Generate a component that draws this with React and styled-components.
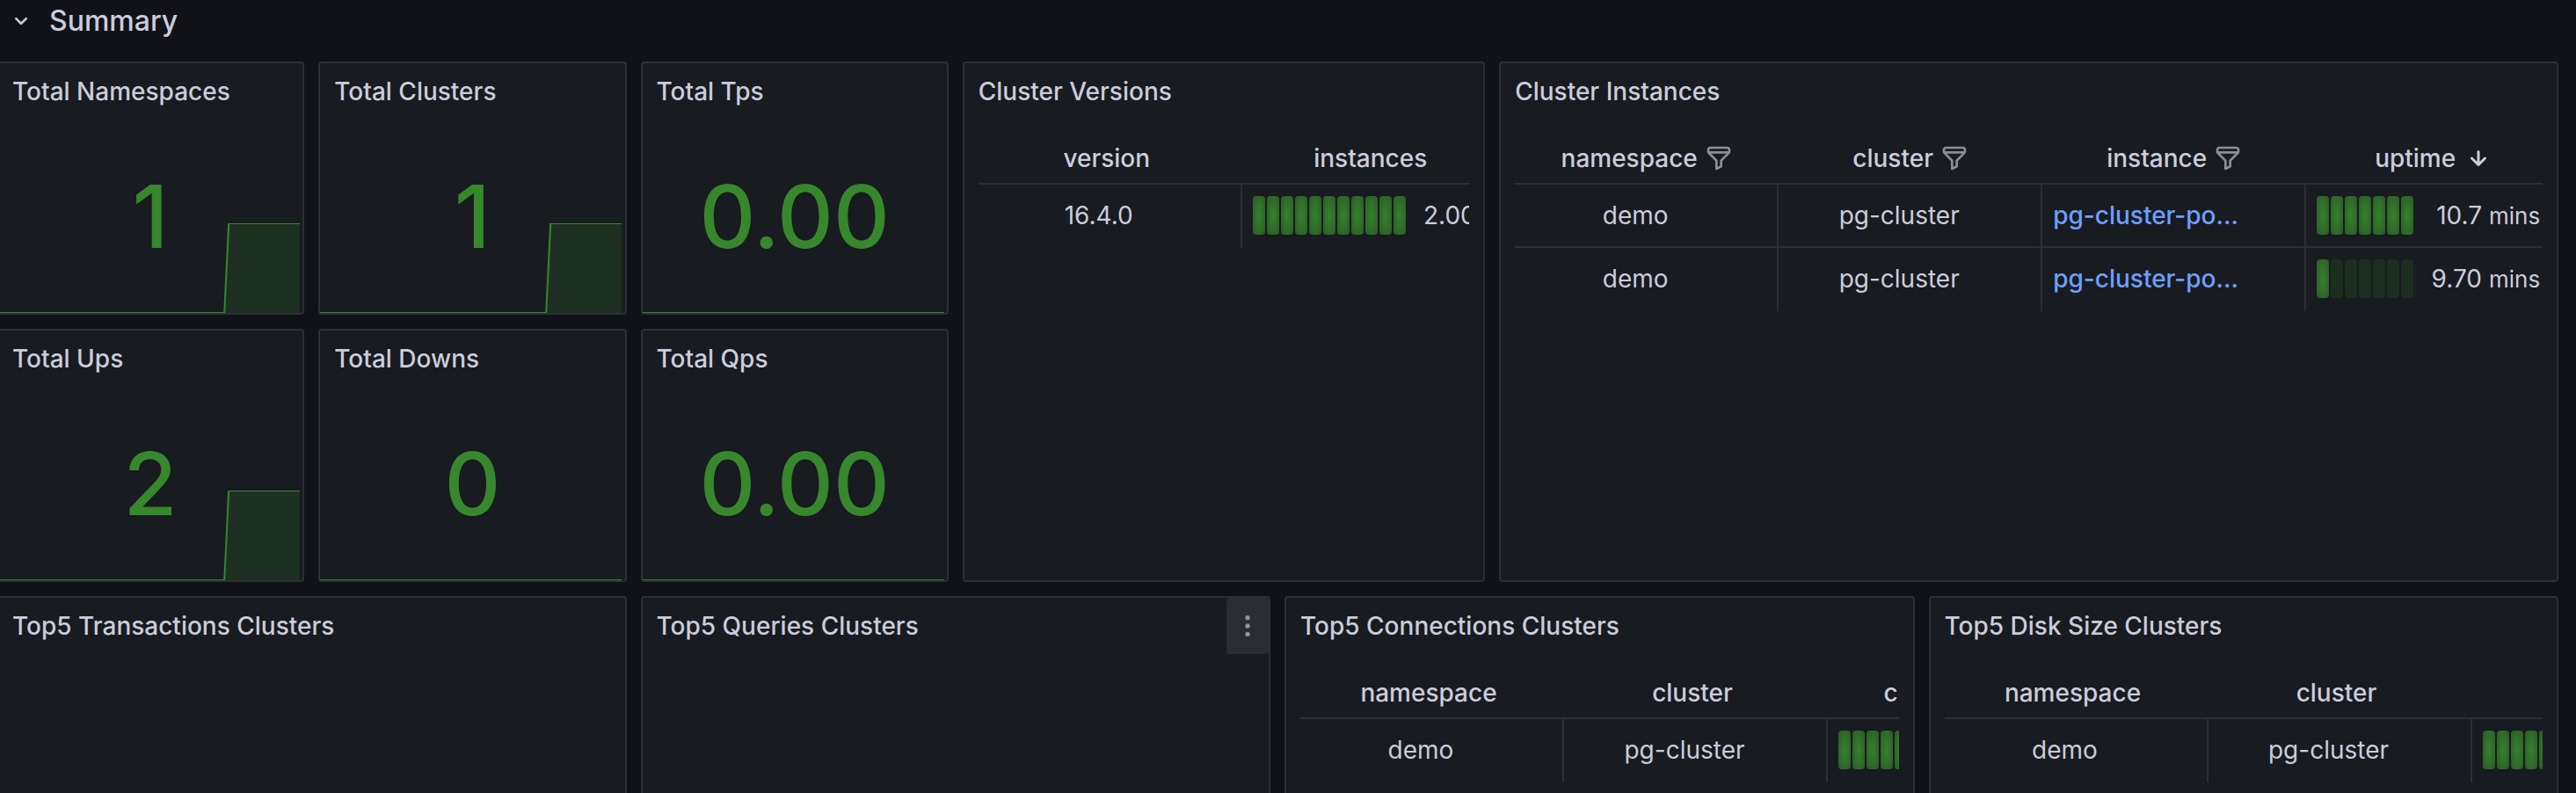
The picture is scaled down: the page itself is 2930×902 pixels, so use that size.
import { useState } from 'react';
import { styled, createGlobalStyle } from 'styled-components';

const GlobalStyle = createGlobalStyle`
  * {
    box-sizing: border-box;
  }
  body {
    margin: 0;
    overflow: hidden;
    background: #111217;
    color: #ccccdc;
    font-family: Inter, "Liberation Sans", sans-serif;
    font-size: 28px;
    line-height: 44px;
  }
`;

const Dashboard = styled.main`
  height: 100vh;
  overflow: hidden;
`;

const RowHeading = styled.h1`
  margin: 0 0 22px;
  font-size: 32px;
`;

const RowToggle = styled.button`
  display: flex;
  align-items: center;
  gap: 16px;
  height: 48px;
  padding: 0 8px;
  border: 0;
  background: none;
  color: inherit;
  font: inherit;
  font-weight: 500;
  cursor: pointer;
`;

const PanelGrid = styled.div`
  display: grid;
  grid-template-columns: repeat(24, minmax(0, 1fr));
  grid-auto-rows: 288px;
  gap: 16px;
  margin: 0 20px 0 -4px;
`;

const PanelBox = styled.section`
  display: flex;
  flex-direction: column;
  grid-column: span ${({ $cols }) => $cols};
  grid-row: span ${({ $rows }) => $rows};
  min-width: 0;
  border: 2px solid #2d2f34;
  border-radius: 4px;
  background: #181b1f;
`;

const PanelHeader = styled.header`
  display: flex;
  align-items: center;
  justify-content: space-between;
  height: 64px;
  padding-left: 16px;
`;

const PanelTitle = styled.h2`
  margin: 0;
  font-size: 28px;
  font-weight: 500;
`;

const MenuButton = styled.button`
  display: flex;
  align-items: center;
  justify-content: center;
  width: 48px;
  height: 64px;
  padding: 0;
  border: 0;
  border-radius: 4px;
  background: #2a2d31;
  color: #9293a0;
  cursor: pointer;
`;

const StatBody = styled.div`
  position: relative;
  display: flex;
  flex: 1;
  align-items: center;
  justify-content: center;
`;

const StatValue = styled.span`
  color: #37872d;
  font-size: 99px;
  font-weight: 500;
  line-height: 120px;
`;

const Spark = styled.svg`
  position: absolute;
  bottom: 0;
  left: 0;
  width: calc(100% - 3px);
  height: 102px;
`;

const TableBody = styled.div`
  flex: 1;
  margin: 0 16px;
  padding-top: 16px;
  overflow: hidden;
`;

const Table = styled.table`
  width: ${({ $count }) => $count * 300}px;
  table-layout: fixed;
  border-spacing: 0;
`;

const HeadCell = styled.th`
  height: 58px;
  padding: 0;
  border-bottom: 2px solid #2d2f34;
  font-weight: 500;
`;

const HeadLabel = styled.div`
  display: flex;
  align-items: center;
  justify-content: center;
`;

const HeadText = styled.span`
  margin-right: 8px;
`;

const IconButton = styled.button`
  display: flex;
  padding: 0;
  border: 0;
  background: none;
  color: #8d8e99;
  cursor: pointer;
`;

const SortIcon = styled.span`
  display: flex;
  margin-right: 8px;
`;

const Cell = styled.td`
  height: 72px;
  padding: 0 36px 0 12px;
  border-right: 2px solid #2d2f34;
  border-bottom: 2px solid #2d2f34;
  text-align: center;
  white-space: nowrap;

  &:last-child {
    padding-right: 0;
    border-right: 0;
  }
  tr:last-child > & {
    padding-bottom: 2px;
    border-bottom: 0;
  }
`;

const InstanceLink = styled.a`
  display: block;
  color: #6e9fff;
  font-weight: 500;
  text-align: left;
  text-decoration: none;
`;

const Gauge = styled.div`
  display: flex;
  align-items: center;
  justify-content: space-between;
  width: 254px;
`;

const Segments = styled.div`
  display: flex;
  gap: 2px;
`;

const Segment = styled.span`
  width: 14px;
  height: 44px;
  border-radius: 4px;
  background: ${({ $lit }) =>
    $lit
      ? 'radial-gradient(rgba(55, 135, 45, 0.95), rgba(55, 135, 45, 0.6))'
      : 'rgba(55, 135, 45, 0.18)'};
`;

const Unit = styled.span`
  margin-left: 8px;
  font-size: 26px;
`;

const icons = {
  angleDown:
    'M17,9.17a1,1,0,0,0-1.41,0L12,12.71,8.46,9.17a1,1,0,0,0-1.41,0,1,1,0,0,0,0,1.42l4.24,4.24a1,1,0,0,0,1.42,0L17,10.59A1,1,0,0,0,17,9.17Z',
  arrowDown:
    'M17.71,11.29a1,1,0,0,0-1.42,0L13,14.59V7a1,1,0,0,0-2,0v7.59l-3.29-3.3a1,1,0,0,0-1.42,1.42l5,5a1,1,0,0,0,.33.21.94.94,0,0,0,.76,0,1,1,0,0,0,.33-.21l5-5A1,1,0,0,0,17.71,11.29Z',
  dots:
    'M12,7a2,2,0,1,0-2-2A2,2,0,0,0,12,7Zm0,10a2,2,0,1,0,2,2A2,2,0,0,0,12,17Zm0-7a2,2,0,1,0,2,2A2,2,0,0,0,12,10Z',
  filter:
    'M19,2H5A3,3,0,0,0,2,5V6.17a3,3,0,0,0,.25,1.2l0,.06a2.81,2.81,0,0,0,.59.86L9,14.41V21a1,1,0,0,0,.47.85A1,1,0,0,0,10,22a1,1,0,0,0,.45-.11l4-2A1,1,0,0,0,15,19V14.41l6.12-6.12a2.81,2.81,0,0,0,.59-.86l0-.06A3,3,0,0,0,22,6.17V5A3,3,0,0,0,19,2ZM13.29,13.29A1,1,0,0,0,13,14v4.38l-2,1V14a1,1,0,0,0-.29-.71L5.41,8H18.59ZM20,6H4V5A1,1,0,0,1,5,4H19a1,1,0,0,1,1,1Z',
};

function Icon({ name, size = 32 }) {
  return (
    <svg width={size} height={size} viewBox="0 0 24 24" fill="currentColor" aria-hidden="true">
      <path d={icons[name]} />
    </svg>
  );
}

function Panel({ title, cols, rows = 1, menu, children }) {
  return (
    <PanelBox $cols={cols} $rows={rows}>
      <PanelHeader>
        <PanelTitle>{title}</PanelTitle>
        {menu && (
          <MenuButton type="button" aria-label={`Menu for ${title}`}>
            <Icon name="dots" />
          </MenuButton>
        )}
      </PanelHeader>
      {children}
    </PanelBox>
  );
}

// the 2px line runs along the edges of the svg, so its flat parts show 1px
function Stat({ title, value, step }) {
  return (
    <Panel title={title} cols={3}>
      <StatBody>
        <Spark viewBox="0 0 343 102" preserveAspectRatio="none" aria-hidden="true">
          {step && <path d="M257 102L262 0H343V102Z" fill="#37872d" fillOpacity="0.2" />}
          <path
            d={step ? 'M0 102H257L262 0H343' : 'M0 102H343'}
            fill="none"
            stroke="#37872d"
            strokeWidth="2"
            vectorEffect="non-scaling-stroke"
          />
        </Spark>
        <StatValue>{value}</StatValue>
      </StatBody>
    </Panel>
  );
}

function BarGauge({ total, lit, value, unit }) {
  return (
    <Gauge>
      <Segments>
        {Array.from({ length: total }, (_, i) => (
          <Segment key={i} $lit={i < lit} />
        ))}
      </Segments>
      {value && (
        <span>
          {value}
          {unit && <Unit>{unit}</Unit>}
        </span>
      )}
    </Gauge>
  );
}

function DataTable({ columns, rows }) {
  return (
    <TableBody>
      <Table $count={columns.length}>
        <thead>
          <tr>
            {columns.map((col) => (
              <HeadCell key={col.name} scope="col">
                <HeadLabel>
                  <HeadText>{col.name}</HeadText>
                  {col.filter && (
                    <IconButton type="button" aria-label={`Filter ${col.name}`}>
                      <Icon name="filter" />
                    </IconButton>
                  )}
                  {col.sorted && (
                    <SortIcon>
                      <Icon name="arrowDown" size={36} />
                    </SortIcon>
                  )}
                </HeadLabel>
              </HeadCell>
            ))}
          </tr>
        </thead>
        <tbody>
          {rows.map((row, i) => (
            <tr key={i}>
              {row.map((cell, j) => (
                <Cell key={j}>{cell}</Cell>
              ))}
            </tr>
          ))}
        </tbody>
      </Table>
    </TableBody>
  );
}

const instanceColumns = [
  { name: 'namespace', filter: true },
  { name: 'cluster', filter: true },
  { name: 'instance', filter: true },
  { name: 'uptime', sorted: true },
];

const instanceRows = [
  { lit: 7, value: '10.7' },
  { lit: 1, value: '9.70' },
].map(({ lit, value }) => [
  'demo',
  'pg-cluster',
  <InstanceLink href="#instance">pg-cluster-po...</InstanceLink>,
  <BarGauge total={7} lit={lit} value={value} unit="mins" />,
]);

export default function App() {
  const [open, setOpen] = useState(true);

  return (
    <Dashboard>
      <GlobalStyle />
      <RowHeading>
        <RowToggle type="button" aria-expanded={open} onClick={() => setOpen(!open)}>
          <Icon name="angleDown" />
          Summary
        </RowToggle>
      </RowHeading>
      {open && (
        <PanelGrid>
          <Stat title="Total Namespaces" value="1" step />
          <Stat title="Total Clusters" value="1" step />
          <Stat title="Total Tps" value="0.00" />
          <Panel title="Cluster Versions" cols={5} rows={2}>
            <DataTable
              columns={[{ name: 'version' }, { name: 'instances' }]}
              rows={[['16.4.0', <BarGauge total={11} lit={11} value="2.00" />]]}
            />
          </Panel>
          <Panel title="Cluster Instances" cols={10} rows={2}>
            <DataTable columns={instanceColumns} rows={instanceRows} />
          </Panel>
          <Stat title="Total Ups" value="2" step />
          <Stat title="Total Downs" value="0" />
          <Stat title="Total Qps" value="0.00" />
          <Panel title="Top5 Transactions Clusters" cols={6} />
          <Panel title="Top5 Queries Clusters" cols={6} menu />
          <Panel title="Top5 Connections Clusters" cols={6}>
            <DataTable
              columns={[{ name: 'namespace' }, { name: 'cluster' }, { name: 'connections' }]}
              rows={[['demo', 'pg-cluster', <BarGauge total={11} lit={11} />]]}
            />
          </Panel>
          <Panel title="Top5 Disk Size Clusters" cols={6}>
            <DataTable
              columns={[{ name: 'namespace' }, { name: 'cluster' }, { name: '' }]}
              rows={[['demo', 'pg-cluster', <BarGauge total={11} lit={11} />]]}
            />
          </Panel>
        </PanelGrid>
      )}
    </Dashboard>
  );
}
